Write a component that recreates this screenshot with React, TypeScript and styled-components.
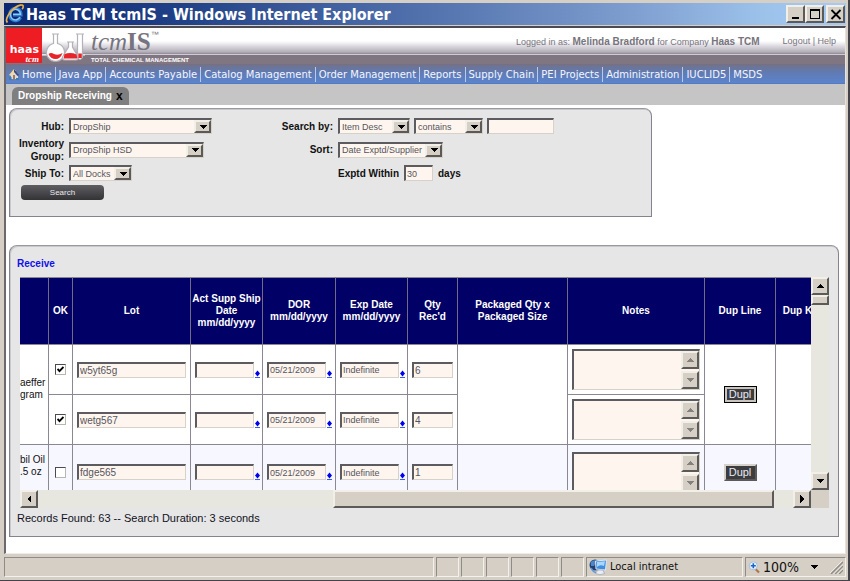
import React from "react";
import styled, { createGlobalStyle, css } from "styled-components";

const sans = `"Liberation Sans", Arial, sans-serif`;
const ui = `"DejaVu Sans Condensed", "DejaVu Sans", Tahoma, sans-serif`;

const Global = createGlobalStyle`
  *, *::before, *::after { box-sizing: border-box; }
  html, body { margin: 0; padding: 0; }
  body { font-family: ${sans}; font-size: 11px; color: #111; background: #d6cfc6; }
  button, input, select, textarea { font-family: ${sans}; margin: 0; border-radius: 0; }
`;

const inset = css`
  border: solid;
  border-width: 2px 1px 1px 2px;
  border-color: #5c5c60 #d6d2ca #d6d2ca #5c5c60;
`;
const raised = css`
  border: 2px solid;
  border-color: #f2efe9 #5c5a58 #5c5a58 #f2efe9;
  background: #d6cfc6;
`;

/* ---------- window frame ---------- */

const WindowFrame = styled.div`
  min-height: 100vh;
  display: flex;
  flex-direction: column;
  background: #d6cfc6;
  border-right: 2px solid #45434a;
  border-bottom: 2px solid #45434a;
  padding: 3px 2px 0 4px;
`;
const TitleBar = styled.header`
  height: 22px;
  flex: none;
  display: flex;
  align-items: center;
  padding: 0 1px 0 1px;
  background: linear-gradient(90deg, #0c2770 0%, #1f3f86 20%, #3f5f9f 38%, #5a7ab4 55%, #7f9fd0 75%, #9cc2ea 90%, #a6caf4 100%);
`;
const TitleText = styled.h1`
  flex: 1;
  margin: 0;
  padding: 1px 0 0 1px;
  font: bold 16px/21px ${ui};
  color: #fff;
  white-space: nowrap;
`;
const CaptionButton = styled.button<{ $gap?: boolean }>`
  ${raised}
  width: 19px;
  height: 18px;
  padding: 0;
  margin-left: ${(p) => (p.$gap ? 2 : 0)}px;
  display: grid;
  place-items: center;
`;
const Client = styled.div`
  flex: 1;
  display: flex;
  flex-direction: column;
  margin-top: 1px;
  border-top: 2px solid #4c4a50;
  border-left: 2px solid #6b696e;
  border-right: 1px solid #e6e3de;
  border-bottom: 1px solid #efece6;
  background: #fff;
`;

/* ---------- banner ---------- */

const Banner = styled.div`
  height: 36px;
  display: flex;
  align-items: flex-start;
  background: linear-gradient(
    180deg,
    #fff 0,
    #fff 13px,
    #dcdae0 18px,
    #b3afb9 24px,
    #8c8793 26px,
    #d0ccd3 26px,
    #d0ccd3 27px,
    #7f7681 27px,
    #7f7681 36px
  );
`;
const HaasMark = styled.div`
  width: 36px;
  height: 35px;
  background: #ee1c23;
  color: #fff;
  text-align: right;
  padding: 16px 3px 0 0;
`;
const HaasName = styled.div`
  font: bold 11px/11px "DejaVu Sans", sans-serif;
`;
const HaasUnit = styled.div`
  font: italic bold 9px/8px "Liberation Serif", serif;
`;
const Product = styled.div`
  margin-left: 6px;
  display: flex;
  flex-direction: column;
`;
const ProductName = styled.div`
  font: italic 25px/28px "Liberation Serif", serif;
  color: #77747f;
  display: flex;
  align-items: flex-start;
`;
const ProductBold = styled.b`
  font-style: normal;
`;
const Trade = styled.span`
  font: 8px/14px ${sans};
`;
const Tagline = styled.div`
  font: bold 6px/8px ${sans};
  color: #fff;
  white-space: nowrap;
`;
const Session = styled.div`
  margin-left: auto;
  padding: 7px 9px 0 0;
  display: flex;
  gap: 23px;
  font-size: 9px;
  line-height: 13px;
  color: #77747c;
  white-space: nowrap;
`;
const SessionName = styled.b`
  font-size: 10px;
`;
const SessionLink = styled.a`
  color: inherit;
  text-decoration: none;
`;

/* ---------- navigation ---------- */

const Nav = styled.nav`
  height: 20px;
  display: flex;
  align-items: center;
  background: linear-gradient(180deg, #776f80 0, #6b7599 3px, #5f7cb8 10px, #5c84cb 19px, #4a70bd 20px);
  overflow: hidden;
`;
const NavLink = styled.a`
  height: 15px;
  display: flex;
  align-items: center;
  gap: 3px;
  padding: 0 3px;
  font: 10px/15px "DejaVu Sans", Verdana, sans-serif;
  color: #f4f6ff;
  text-decoration: none;
  white-space: nowrap;
  border-right: 1px solid #b8cbe8;
  &:last-child { border-right: 0; }
`;
const TabStrip = styled.div`
  height: 21px;
  background: #c5c5c5;
  display: flex;
  align-items: flex-end;
  padding-left: 6px;
`;
const Tab = styled.div`
  height: 18px;
  display: flex;
  align-items: center;
  gap: 4px;
  padding: 0 6px;
  background: #7f7f7f;
  border-radius: 6px 6px 0 0;
  color: #fff;
  font: bold 10px/18px ${sans};
`;
const TabClose = styled.button`
  border: 0;
  padding: 0;
  background: none;
  color: #000;
  font: bold 12px/16px ${sans};
`;

/* ---------- panels and form ---------- */

const Page = styled.main`
  flex: 1;
  padding: 3px 6px 16px 3px;
  display: flex;
  flex-direction: column;
  gap: 28px;
`;
const Panel = styled.section`
  background: #e6e6e6;
  border: 1px solid #85838d;
  border-top-color: #9a989f;
  border-radius: 8px 8px 0 0;
  box-shadow: inset 1px 1px 0 #c9c8cd;
`;
const FilterPanel = styled(Panel)`
  width: 100%;
  max-width: 643px;
  padding: 7px 0 16px;
`;
const FilterForm = styled.form`
  display: grid;
  grid-template-columns: 54px 204px 55px 1fr;
  grid-template-rows: 20px 27px 20px;
  column-gap: 5px;
  align-items: center;
`;
const FieldLabel = styled.label`
  font: bold 10px/13px ${sans};
  color: #111;
  text-align: right;
  white-space: nowrap;
`;
const Controls = styled.div<{ $gap: number }>`
  display: flex;
  align-items: center;
  gap: ${(p) => p.$gap}px;
`;
const SelectBox = styled.span<{ $w: number }>`
  position: relative;
  width: ${(p) => p.$w}px;
  height: 16px;
  display: flex;
`;
const NativeSelect = styled.select`
  ${inset}
  appearance: none;
  width: 100%;
  background: #fff5ef;
  color: #55555c;
  font-size: 9px;
  padding: 0 0 0 2px;
`;
const DropArrow = styled.span`
  ${raised}
  position: absolute;
  right: 1px;
  top: 2px;
  bottom: 1px;
  width: 17px;
  display: grid;
  place-items: center;
  pointer-events: none;
`;
const TextInput = styled.input<{ $w?: number; $large?: boolean }>`
  ${inset}
  width: ${(p) => (p.$w ? `${p.$w}px` : "100%")};
  height: 16px;
  background: #fff5ef;
  color: #55555c;
  font-size: ${(p) => (p.$large ? 10 : 9)}px;
  padding: 0 0 0 1px;
`;
const SearchButton = styled.button`
  width: 83px;
  height: 15px;
  margin: 2px 0 0 11px;
  grid-column: 1 / 3;
  border: 0;
  border-radius: 4px;
  background: linear-gradient(180deg, #5e5e62, #333336);
  color: #e8e8ee;
  font-size: 8px;
  line-height: 13px;
  padding: 0;
`;

/* ---------- results ---------- */

const ResultsPanel = styled(Panel)`
  padding: 11px 9px 11px 7px;
`;
const ReceiveLink = styled.a`
  display: block;
  font: bold 10px/14px ${sans};
  color: #1010e8;
  text-decoration: none;
`;
const ScrollArea = styled.div`
  margin: 6px 0 0 3px;
  display: grid;
  grid-template-columns: minmax(0, 1fr) 18px;
  grid-template-rows: 213px 18px;
`;
const Viewport = styled.div`
  overflow: hidden;
  background: #fff;
`;
const Grid = styled.table`
  table-layout: fixed;
  width: 100%;
  min-width: 806px;
  border-collapse: separate;
  border-spacing: 0;
`;
const Col = styled.col<{ $w?: number }>`
  width: ${(p) => (p.$w ? `${p.$w}px` : "auto")};
`;
const HeadCell = styled.th`
  height: 68px;
  padding: 0;
  background: #000066;
  color: #fff;
  font: bold 10px/12px ${sans};
  border-top: 1px solid #8b8894;
  border-right: 1px solid #6f6c84;
  border-bottom: 1px solid #8b8894;
  white-space: pre-line;
`;
const Row = styled.tr<{ $tall?: boolean }>`
  height: ${(p) => (p.$tall ? 55 : 50)}px;
  background: ${(p) => (p.$tall ? "#f7f7ff" : "#fff")};
`;
const Cell = styled.td<{ $center?: boolean }>`
  padding: 0 4px;
  border-right: 1px solid #8b8894;
  border-bottom: 1px solid #8b8894;
  text-align: ${(p) => (p.$center ? "center" : "left")};
  vertical-align: middle;
`;
const ItemCell = styled(Cell)`
  padding: 0;
  font-size: 10px;
  line-height: 12px;
  white-space: pre;
`;
const DateField = styled.div`
  display: flex;
  align-items: flex-end;
`;
const CalendarLink = styled.a`
  display: block;
  width: 7px;
  height: 9px;
  flex: none;
`;
const CheckWrap = styled.span`
  position: relative;
  display: block;
  width: 11px;
  height: 11px;
  margin: 0 auto;
`;
const CheckInput = styled.input`
  appearance: none;
  display: block;
  width: 11px;
  height: 11px;
  background: #fff;
  border: 1px solid;
  border-color: #4c4a50 #b9b6b0 #b9b6b0 #4c4a50;
  & + svg { display: none; }
  &:checked + svg { display: block; }
`;
const CheckMark = styled.svg`
  position: absolute;
  left: 2px;
  top: 2px;
  pointer-events: none;
`;
const NoteBox = styled.div`
  ${inset}
  width: 128px;
  height: 41px;
  display: flex;
  background: #fff5ef;
`;
const NoteInput = styled.textarea`
  flex: 1;
  min-width: 0;
  border: 0;
  padding: 1px;
  resize: none;
  background: transparent;
  font-size: 10px;
  overflow: hidden;
`;
const NoteArrows = styled.div`
  display: flex;
  flex-direction: column;
  justify-content: space-between;
`;
const ScrollButton = styled.button`
  ${raised}
  width: 18px;
  height: 18px;
  flex: none;
  padding: 0;
  display: grid;
  place-items: center;
`;
const DuplButton = styled.button<{ $focus?: boolean }>`
  width: 33px;
  height: 17px;
  padding: 0;
  background: #3d3c3f;
  color: #e9e9f4;
  font-size: 11px;
  line-height: 11px;
  border: 2px solid;
  border-color: #d6d2cb #5c5a58 #5c5a58 #d6d2cb;
  ${(p) =>
    p.$focus &&
    css`
      border-color: #c9c5be;
      outline: 1px solid #000;
      outline-offset: -1px;
      border-width: 3px;
    `}
`;
const VTrack = styled.div`
  display: flex;
  flex-direction: column;
  background: #e7e6df;
`;
const VThumb = styled.div`
  ${raised}
  height: 10px;
`;
const HTrack = styled.div`
  display: flex;
  background: #e7e6df;
`;
const HThumb = styled.div`
  ${raised}
  flex: 439;
`;
const TrackSpace = styled.div<{ $grow: number }>`
  flex: ${(p) => p.$grow};
`;
const Corner = styled.div`
  background: #d6cfc6;
`;
const Summary = styled.p`
  margin: 4px 0 0;
  font-size: 11px;
  line-height: 13px;
  color: #111122;
`;

/* ---------- status bar ---------- */

const StatusBar = styled.footer`
  height: 26px;
  flex: none;
  display: flex;
  gap: 2px;
  padding: 3px 0 3px 0;
  background: #d6cfc6;
`;
const StatusCell = styled.div<{ $w?: number }>`
  ${(p) => (p.$w ? `flex: none; width: ${p.$w}px;` : "flex: 1;")}
  border: 1px solid;
  border-color: #8f8b86 #f4f1ec #f4f1ec #8f8b86;
  display: flex;
  align-items: center;
  gap: 2px;
  padding: 0 2px;
  font: 11px/18px ${ui};
  color: #111;
  white-space: nowrap;
`;
const ZoomLevel = styled.span`
  flex: 1;
  font-size: 14px;
`;
const Spacer = styled.span`
  width: 8px;
`;

/* ---------- drawings ---------- */

const paths = {
  up: "M0 4 L4 0 L8 4 Z",
  down: "M0 0 L4 4 L8 0 Z",
  left: "M4 0 L0 4 L4 8 Z",
  right: "M0 0 L4 4 L0 8 Z",
};
function Arrow({ dir, dim }: { dir: keyof typeof paths; dim?: boolean }) {
  const vertical = dir === "up" || dir === "down";
  return (
    <svg width={vertical ? 8 : 4} height={vertical ? 4 : 8} shapeRendering="crispEdges" aria-hidden="true">
      <path d={paths[dir]} fill={dim ? "#85827e" : "#000"} />
    </svg>
  );
}

function IeIcon() {
  return (
    <svg width="20" height="20" viewBox="0 0 20 20" fill="none" aria-hidden="true">
      <path d="M15.5 13.5 C14 16.5 10 17.5 7 15.5 C3.8 13 4.2 7.5 7.5 5.3 C11 3.2 16 5.2 16 10.8 H8" stroke="#2f7fd0" strokeWidth="3.2" />
      <path d="M15 13 C13.5 15.8 10 16.8 7.4 15 C4.6 12.6 5 8 7.9 6 C11 4.2 15.4 6 15.4 10.4 H8" stroke="#8fcbf5" strokeWidth="1.4" />
      <path d="M2.5 18.5 C-0.5 16 4 8 9.5 4 C13.5 1 18 0 18.2 2.2 C18.4 3.4 17.6 4.6 17 5.2" stroke="#e8b04a" strokeWidth="1.7" />
    </svg>
  );
}

function Flasks() {
  return (
    <svg width="43" height="36" viewBox="0 0 43 36" aria-hidden="true">
      <path d="M0 27 H7 M37 27 H43" stroke="#fff" strokeWidth="1" />
      <g fill="#fff" stroke="#b4b1b8" strokeWidth="1.2">
        <path d="M10 6 H17 M11.5 6 V15.5 A9 9 0 1 0 15.5 15.5 V6" />
        <path d="M25 14 H32 M26.5 14 V19 L20.5 29 Q20 32 23 32 H34 Q37 32 36 29 L30.5 19 V14" />
        <path d="M34 6 H42 M35.5 6 V29 Q38 34 40.5 29 V6" />
      </g>
      <path d="M6.5 26 Q9 24 12 26 Q16 28 20.5 25 Q18.500 31 13.500 31 Q8.500 31 6.500 26 Z" fill="#e8242b" />
      <path d="M22.500 26 Q29 24 34.500 26.500 L35.500 30.500 H21.500 Z" fill="#e8242b" />
      <path d="M36.300 25.500 H39.800 V30 H36.300 Z" fill="#e8242b" />
    </svg>
  );
}

function HomeIcon() {
  return (
    <svg width="10" height="11" viewBox="0 0 10 11" aria-hidden="true">
      <path d="M2 5 L6 2 L9 5 V10 H2 Z" fill="#d9dbe0" />
      <path d="M0 6 L5 0 L7 2 L2 7 Z" fill="#f3d9a2" />
      <path d="M5 0 L10 6 L8.500 7 L5 3 Z" fill="#3b4b78" />
      <path d="M4 6 H6 V10 H4 Z" fill="#b07a3a" />
      <path d="M0 8 H2.500 V11 H0 Z M7 9 H10 V11 H7 Z" fill="#3f7fb0" />
    </svg>
  );
}

function CalendarMark() {
  return (
    <svg width="7" height="9" viewBox="0 0 7 9" aria-hidden="true">
      <path d="M3.500 0.500 L6 3.500 L3.500 6.500 L1 3.500 Z" fill="#0000f0" />
      <path d="M1 7 H6 V8 H1 Z" fill="#3a5cf0" />
    </svg>
  );
}

function IntranetIcon() {
  return (
    <svg width="19" height="18" viewBox="0 0 19 18" aria-hidden="true">
      <circle cx="6" cy="7" r="5.500" fill="#23406f" />
      <path d="M1.500 4 Q5 1 8 3 L5 8 L2 8 Z" fill="#4c86c8" />
      <path d="M6.500 3 L17.500 2 L16.500 12 L7 11 Z" fill="#3f8ee0" stroke="#dfe7f2" strokeWidth="1" />
      <path d="M8 4 L16 3.300 L15 8 Q11 6 8 9 Z" fill="#a9d7fb" />
      <path d="M9 12 H14 L15.500 15.500 Q11 18 6.500 15.500 Z" fill="#e9edf3" stroke="#8b96a8" strokeWidth="0.600" />
      <path d="M2 10 Q4 14 7 14.500" stroke="#5a9be0" strokeWidth="1.500" fill="none" />
    </svg>
  );
}

function ZoomIcon() {
  return (
    <svg width="13" height="13" viewBox="0 0 12 13" aria-hidden="true">
      <path d="M6.500 7.500 L10.500 11.500" stroke="#b5753f" strokeWidth="2.200" />
      <circle cx="4.800" cy="4.800" r="4" fill="#e8f2fd" stroke="#a3bfe0" />
      <path d="M2.300 4.800 H7.300 M4.800 2.300 V7.300" stroke="#1c62c8" strokeWidth="1.600" />
    </svg>
  );
}

function Grip() {
  return (
    <svg width="13" height="13" viewBox="0 0 13 13" aria-hidden="true">
      <path d="M1 13 L13 1 M5 13 L13 5 M9 13 L13 9" stroke="#8f8b86" strokeWidth="1.500" />
      <path d="M0 12 L12 0 M3.500 13 L13 3.500 M7.500 13 L13 7.500" stroke="#f6f3ee" strokeWidth="0.800" />
    </svg>
  );
}

/* ---------- composed parts ---------- */

function Select({ id, label, value, width }: { id: string; label?: string; value: string; width: number }) {
  return (
    <SelectBox $w={width}>
      <NativeSelect id={id} aria-label={label} defaultValue={value}>
        <option>{value}</option>
      </NativeSelect>
      <DropArrow>
        <Arrow dir="down" />
      </DropArrow>
    </SelectBox>
  );
}

function DateInput({ label, value }: { label: string; value: string }) {
  return (
    <DateField>
      <TextInput $w={59} aria-label={label} defaultValue={value} />
      <CalendarLink href="#calendar" aria-label={`Pick ${label}`}>
        <CalendarMark />
      </CalendarLink>
    </DateField>
  );
}

function Note() {
  return (
    <NoteBox>
      <NoteInput aria-label="Notes" />
      <NoteArrows>
        <ScrollButton type="button" aria-label="Scroll notes up">
          <Arrow dir="up" dim />
        </ScrollButton>
        <ScrollButton type="button" aria-label="Scroll notes down">
          <Arrow dir="down" dim />
        </ScrollButton>
      </NoteArrows>
    </NoteBox>
  );
}

const navItems = [
  "Java App",
  "Accounts Payable",
  "Catalog Management",
  "Order Management",
  "Reports",
  "Supply Chain",
  "PEI Projects",
  "Administration",
  "IUCLID5",
  "MSDS",
];

const columns: { title: string; width?: number }[] = [
  { title: "", width: 29 },
  { title: "OK", width: 24 },
  { title: "Lot", width: 118 },
  { title: "Act Supp Ship\nDate\nmm/dd/yyyy", width: 72 },
  { title: "DOR\nmm/dd/yyyy", width: 73 },
  { title: "Exp Date\nmm/dd/yyyy", width: 72 },
  { title: "Qty\nRec'd", width: 50 },
  { title: "Packaged Qty x\nPackaged Size" },
  { title: "Notes", width: 137 },
  { title: "Dup Line", width: 71 },
  { title: "Dup Kit", width: 50 },
];

type Line = { item?: string; span?: number; ok: boolean; lot: string; qty: string; tall?: boolean; focus?: boolean };
const lines: Line[] = [
  { item: "aeffer\ngram\n ", span: 2, ok: true, lot: "w5yt65g", qty: "6", focus: true },
  { ok: true, lot: "wetg567", qty: "4" },
  { item: "bil Oil\n.5 oz\n ", span: 1, ok: false, lot: "fdge565", qty: "1", tall: true },
];

function ReceiptRow({ line }: { line: Line }) {
  return (
    <Row $tall={line.tall}>
      {line.span && <ItemCell rowSpan={line.span}>{line.item}</ItemCell>}
      <Cell>
        <CheckWrap>
          <CheckInput type="checkbox" aria-label={`OK ${line.lot}`} defaultChecked={line.ok} />
          <CheckMark width="7" height="7" viewBox="0 0 7 7">
            <path d="M0.500 3 L2.500 5.200 L6.500 1" stroke="#000" strokeWidth="1.900" fill="none" />
          </CheckMark>
        </CheckWrap>
      </Cell>
      <Cell>
        <TextInput $large aria-label="Lot" defaultValue={line.lot} />
      </Cell>
      <Cell>
        <DateInput label="actual supplier ship date" value="" />
      </Cell>
      <Cell>
        <DateInput label="date of receipt" value="05/21/2009" />
      </Cell>
      <Cell>
        <DateInput label="expiration date" value="Indefinite" />
      </Cell>
      <Cell>
        <TextInput $large aria-label="Quantity received" defaultValue={line.qty} />
      </Cell>
      {line.span && <Cell rowSpan={line.span} />}
      <Cell>
        <Note />
      </Cell>
      {line.span && (
        <Cell rowSpan={line.span} $center>
          <DuplButton type="button" $focus={line.focus}>
            Dupl
          </DuplButton>
        </Cell>
      )}
      {line.span && <Cell rowSpan={line.span} />}
    </Row>
  );
}

export default function App() {
  return (
    <>
      <Global />
      <WindowFrame>
        <TitleBar>
          <IeIcon />
          <TitleText>Haas TCM tcmIS - Windows Internet Explorer</TitleText>
          <CaptionButton aria-label="Minimize">
            <svg width="12" height="11">
              <path d="M2 9 H9" stroke="#000" strokeWidth="2" />
            </svg>
          </CaptionButton>
          <CaptionButton aria-label="Maximize">
            <svg width="12" height="11" shapeRendering="crispEdges">
              <path d="M1 0 H11 V10 H1 Z M2 2 V9 H10 V2 Z" fill="#000" fillRule="evenodd" />
            </svg>
          </CaptionButton>
          <CaptionButton aria-label="Close" $gap>
            <svg width="12" height="11">
              <path d="M1.500 1 L10.500 10 M10.500 1 L1.500 10" stroke="#000" strokeWidth="1.800" />
            </svg>
          </CaptionButton>
        </TitleBar>

        <Client>
          <Banner>
            <HaasMark>
              <HaasName>haas</HaasName>
              <HaasUnit>tcm</HaasUnit>
            </HaasMark>
            <Flasks />
            <Product>
              <ProductName>
                tcm<ProductBold>IS</ProductBold>
                <Trade>™</Trade>
              </ProductName>
              <Tagline>TOTAL CHEMICAL MANAGEMENT</Tagline>
            </Product>
            <Session>
              <span>
                Logged in as: <SessionName>Melinda Bradford</SessionName> for Company <SessionName>Haas TCM</SessionName>
              </span>
              <span>
                <SessionLink href="#logout">Logout</SessionLink> | <SessionLink href="#help">Help</SessionLink>
              </span>
            </Session>
          </Banner>

          <Nav>
            <NavLink href="#home">
              <HomeIcon />
              Home
            </NavLink>
            {navItems.map((item) => (
              <NavLink key={item} href="#menu">
                {item}
              </NavLink>
            ))}
          </Nav>
          <TabStrip>
            <Tab>
              Dropship Receiving
              <TabClose aria-label="Close tab">x</TabClose>
            </Tab>
          </TabStrip>

          <Page>
            <FilterPanel>
              <FilterForm>
                <FieldLabel htmlFor="hub">Hub:</FieldLabel>
                <Select id="hub" value="DropShip" width={143} />
                <FieldLabel htmlFor="searchBy">Search by:</FieldLabel>
                <Controls $gap={4}>
                  <Select id="searchBy" value="Item Desc" width={72} />
                  <Select id="match" label="Match" value="contains" width={69} />
                  <TextInput $w={67} aria-label="Search text" />
                </Controls>

                <FieldLabel htmlFor="group">
                  Inventory
                  <br />
                  Group:
                </FieldLabel>
                <Select id="group" value="DropShip HSD" width={135} />
                <FieldLabel htmlFor="sort">Sort:</FieldLabel>
                <Select id="sort" value="Date Exptd/Supplier" width={105} />

                <FieldLabel htmlFor="dock">Ship To:</FieldLabel>
                <Select id="dock" value="All Docks" width={63} />
                <span />
                <Controls $gap={5}>
                  <FieldLabel htmlFor="within">Exptd Within</FieldLabel>
                  <TextInput id="within" $w={29} defaultValue="30" />
                  <FieldLabel htmlFor="within">days</FieldLabel>
                </Controls>

                <SearchButton type="button">Search</SearchButton>
              </FilterForm>
            </FilterPanel>

            <ResultsPanel>
              <ReceiveLink href="#receive">Receive</ReceiveLink>
              <ScrollArea>
                <Viewport>
                  <Grid>
                    <colgroup>
                      {columns.map((c, i) => (
                        <Col key={i} $w={c.width} />
                      ))}
                    </colgroup>
                    <thead>
                      <tr>
                        {columns.map((c, i) => (
                          <HeadCell key={i}>{c.title}</HeadCell>
                        ))}
                      </tr>
                    </thead>
                    <tbody>
                      {lines.map((line) => (
                        <ReceiptRow key={line.lot} line={line} />
                      ))}
                    </tbody>
                  </Grid>
                </Viewport>
                <VTrack>
                  <ScrollButton aria-label="Scroll up">
                    <Arrow dir="up" />
                  </ScrollButton>
                  <VThumb />
                  <TrackSpace $grow={1} />
                  <ScrollButton aria-label="Scroll down">
                    <Arrow dir="down" />
                  </ScrollButton>
                </VTrack>
                <HTrack>
                  <ScrollButton aria-label="Scroll left">
                    <Arrow dir="left" />
                  </ScrollButton>
                  <TrackSpace $grow={297} />
                  <HThumb />
                  <TrackSpace $grow={19} />
                  <ScrollButton aria-label="Scroll right">
                    <Arrow dir="right" />
                  </ScrollButton>
                </HTrack>
                <Corner />
              </ScrollArea>
              <Summary>Records Found: 63 -- Search Duration: 3 seconds</Summary>
            </ResultsPanel>
          </Page>
        </Client>

        <StatusBar>
          <StatusCell />
          {[1, 2, 3, 4, 5, 6].map((n) => (
            <StatusCell key={n} $w={23} />
          ))}
          <StatusCell $w={157}>
            <IntranetIcon />
            Local intranet
          </StatusCell>
          <StatusCell $w={101}>
            <ZoomIcon />
            <ZoomLevel>100%</ZoomLevel>
            <Arrow dir="down" />
            <Spacer />
            <Grip />
          </StatusCell>
        </StatusBar>
      </WindowFrame>
    </>
  );
}
